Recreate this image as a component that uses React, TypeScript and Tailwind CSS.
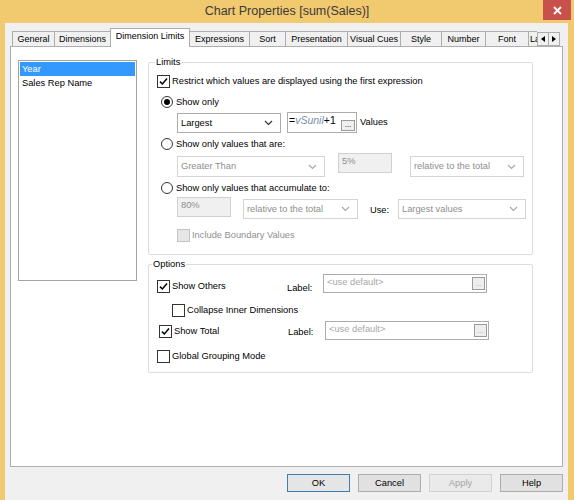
import React from 'react';

function Check({ checked = false, disabled = false }: { checked?: boolean; disabled?: boolean }) {
  return (
    <span
      className={`w-[13px] h-[13px] shrink-0 border flex items-center justify-center ${
        disabled ? 'border-[#c4c4c4] bg-[#e6e6e6]' : 'border-[#333333] bg-white'
      }`}
    >
      {checked && (
        <svg width="9" height="9" viewBox="0 0 9 9">
          <path d="M1 4.6 L3.4 7 L8 1.6" stroke="#000" strokeWidth="1.5" fill="none" />
        </svg>
      )}
    </span>
  );
}

function Radio({ on = false }: { on?: boolean }) {
  return (
    <span className="w-[12px] h-[12px] shrink-0 rounded-full border border-[#333333] bg-white flex items-center justify-center">
      {on && <span className="w-[6px] h-[6px] rounded-full bg-black" />}
    </span>
  );
}

function Chevron({ muted = false }: { muted?: boolean }) {
  return (
    <svg width="9" height="6" viewBox="0 0 9 6" className="shrink-0">
      <path d="M1 1 L4.5 4.5 L8 1" stroke={muted ? '#a8a8a8' : '#333'} strokeWidth="1.2" fill="none" />
    </svg>
  );
}

function Select({ text, className, disabled = false }: { text: string; className: string; disabled?: boolean }) {
  return (
    <div
      className={`flex items-center justify-between pl-[3px] pr-[7px] bg-white border ${
        disabled ? 'border-[#d4d4d4] text-[#8e8e8e]' : 'border-[#acacac] text-black'
      } ${className}`}
    >
      <span>{text}</span>
      <Chevron muted={disabled} />
    </div>
  );
}

function Dots({ className }: { className: string }) {
  return (
    <span
      className={`border border-[#9a9a9a] bg-[#eeeeee] flex items-end justify-center text-[8px] leading-[8px] pb-[1px] ${className}`}
    >
      ...
    </span>
  );
}

const tabs: { name: string; w: string; active?: boolean }[] = [
  { name: 'General', w: 'w-[43px]' },
  { name: 'Dimensions', w: 'w-[57px]' },
  { name: 'Dimension Limits', w: 'w-[80px]', active: true },
  { name: 'Expressions', w: 'w-[61px]' },
  { name: 'Sort', w: 'w-[37px]' },
  { name: 'Presentation', w: 'w-[63px]' },
  { name: 'Visual Cues', w: 'w-[54px]' },
  { name: 'Style', w: 'w-[42px]' },
  { name: 'Number', w: 'w-[45px]' },
  { name: 'Font', w: 'w-[44px]' },
];

export default function App() {
  return (
    <div className="w-[574px] h-[500px] bg-[#f1c96f] flex flex-col overflow-hidden font-['Liberation_Sans',Arial,sans-serif] text-[9.3px] leading-[13px] text-black">
      {/* title bar */}
      <div className="relative h-[23px] shrink-0 flex items-center justify-center">
        <span className="text-[12.5px] text-[#3a3a3a] leading-[23px]">Chart Properties [sum(Sales)]</span>
        <div className="absolute right-[3px] top-0 w-[28px] h-[20px] bg-[#c9514c] flex items-center justify-center">
          <svg width="9" height="9" viewBox="0 0 9 9">
            <path d="M1 1 L8 8 M8 1 L1 8" stroke="#fff" strokeWidth="1.8" />
          </svg>
        </div>
      </div>

      {/* client area */}
      <div className="ml-[5px] mr-[6px] flex-1 bg-[#f0f0f0] flex flex-col">
        {/* tab strip */}
        <div className="mt-[6px] h-[18px] flex items-end ml-[7px] relative z-10">
          <div className="w-[525px] h-[19px] flex items-end overflow-hidden">
            {tabs.map((t, i) => (
              <div
                key={t.name}
                className={`${t.w} shrink-0 flex items-center justify-center border border-b-0 text-[9px] ${
                  i > 0 ? '-ml-px' : ''
                } ${
                  t.active
                    ? 'h-[19px] bg-white border-[#adadad] relative z-10 pb-[3px]'
                    : 'h-[15px] bg-[#f0f0f0] border-[#adadad] mb-px'
                }`}
              >
                <span className="whitespace-nowrap">{t.name}</span>
              </div>
            ))}
            <div className="-ml-px w-[40px] h-[15px] mb-px shrink-0 border border-b-0 border-[#adadad] bg-[#f0f0f0] pl-px flex items-center text-[9px]">
              <span className="whitespace-nowrap">Layout</span>
            </div>
          </div>
          <div className="flex mb-px">
            <span className="w-[12px] h-[14px] border border-[#adadad] bg-[#f0f0f0] flex items-center justify-center">
              <svg width="4" height="6" viewBox="0 0 4 6">
                <path d="M4 0 L0 3 L4 6 Z" fill="#000" />
              </svg>
            </span>
            <span className="w-[12px] h-[14px] -ml-px border border-[#adadad] bg-[#f0f0f0] flex items-center justify-center">
              <svg width="4" height="6" viewBox="0 0 4 6">
                <path d="M0 0 L4 3 L0 6 Z" fill="#000" />
              </svg>
            </span>
          </div>
        </div>

        {/* tab page */}
        <div className="mx-[5px] h-[421px] -mt-px bg-white border border-[#adadad] flex items-start">
          {/* dimension list */}
          <div className="ml-[7px] mt-[13px] w-[119px] h-[221px] border border-[#a3a3a3] p-px flex flex-col">
            <div className="h-[14px] bg-[#3399ff] text-white pl-[2px] flex items-center">Year</div>
            <div className="h-[14px] pl-[2px] flex items-center">Sales Rep Name</div>
          </div>

          <div className="ml-[11px] mt-[9px] w-[385px] flex flex-col">
            {/* Limits */}
            <fieldset className="border border-[#dcdcdc] rounded-[2px] pb-[12px]">
              <legend className="ml-[6px] px-[1px] leading-[12px]">Limits</legend>
              <div className="flex flex-col">
                <label className="ml-[8px] mt-[7px] h-[13px] flex items-center gap-[2px]">
                  <Check checked />
                  <span>Restrict which values are displayed using the first expression</span>
                </label>

                <label className="ml-[12px] mt-[8px] h-[12px] flex items-center gap-[3px]">
                  <Radio on />
                  <span>Show only</span>
                </label>
                <div className="ml-[28px] mt-[4px] flex items-start">
                  <Select text="Largest" className="mt-px w-[104px] h-[20px]" />
                  <div className="ml-[6px] w-[70px] h-[21px] border border-[#acacac] bg-white flex items-start justify-between pl-[1px] pr-px text-[10.5px] leading-[12px]">
                    <span className="mt-px">
                      =<span className="italic text-[#7d8ea8]">vSunil</span>+1
                    </span>
                    <Dots className="mt-[7px] w-[14px] h-[11px]" />
                  </div>
                  <span className="ml-[3px] mt-[4px]">Values</span>
                </div>

                <label className="ml-[12px] mt-[5px] h-[12px] flex items-center gap-[3px]">
                  <Radio />
                  <span>Show only values that are:</span>
                </label>
                <div className="ml-[28px] mt-[3px] flex items-start">
                  <Select text="Greater Than" disabled className="mt-[3px] w-[148px] h-[21px]" />
                  <div className="ml-[13px] w-[54px] h-[20px] border border-[#d0d0d0] bg-[#f0f0f0] text-[#8e8e8e] pl-[3px] pt-px">
                    5%
                  </div>
                  <Select text="relative to the total" disabled className="ml-[18px] mt-[3px] w-[114px] h-[21px]" />
                </div>

                <label className="ml-[12px] mt-[5px] h-[12px] flex items-center gap-[3px]">
                  <Radio />
                  <span>Show only values that accumulate to:</span>
                </label>
                <div className="ml-[28px] mt-[3px] flex items-start">
                  <div className="w-[54px] h-[20px] border border-[#d0d0d0] bg-[#f0f0f0] text-[#8e8e8e] pl-[3px] pt-px">
                    80%
                  </div>
                  <Select text="relative to the total" disabled className="ml-[12px] mt-[2px] w-[115px] h-[20px]" />
                  <span className="ml-[12px] mt-[7px] w-[28px]">Use:</span>
                  <Select text="Largest values" disabled className="mt-[2px] w-[128px] h-[20px]" />
                </div>

                <label className="ml-[28px] mt-[10px] h-[13px] flex items-center gap-[2px] text-[#8e8e8e]">
                  <Check disabled />
                  <span>Include Boundary Values</span>
                </label>
              </div>
            </fieldset>

            {/* Options */}
            <fieldset className="mt-[3px] border border-[#dcdcdc] rounded-[2px] pb-[9px]">
              <legend className="ml-[3px] px-[1px] leading-[12px]">Options</legend>
              <div className="flex flex-col">
                <div className="ml-[8px] mt-[4px] flex items-start">
                  <label className="w-[130px] mt-[6px] h-[13px] flex items-center gap-[2px]">
                    <Check checked />
                    <span>Show Others</span>
                  </label>
                  <span className="w-[36px] mt-[8px]">Label:</span>
                  <div className="w-[164px] h-[19px] border border-[#acacac] bg-white flex items-start justify-between pl-[3px] pr-px text-[#a8a8a8]">
                    <span className="mt-px">&lt;use default&gt;</span>
                    <Dots className="mt-[2px] w-[13px] h-[13px]" />
                  </div>
                </div>

                <label className="ml-[23px] mt-[9px] h-[13px] flex items-center gap-[2px]">
                  <Check />
                  <span>Collapse Inner Dimensions</span>
                </label>

                <div className="ml-[10px] mt-[4px] flex items-start">
                  <label className="w-[129px] mt-[4px] h-[13px] flex items-center gap-[2px]">
                    <Check checked />
                    <span>Show Total</span>
                  </label>
                  <span className="w-[37px] mt-[5px]">Label:</span>
                  <div className="w-[164px] h-[19px] border border-[#acacac] bg-white flex items-start justify-between pl-[3px] pr-px text-[#a8a8a8]">
                    <span className="mt-px">&lt;use default&gt;</span>
                    <Dots className="mt-[2px] w-[13px] h-[13px]" />
                  </div>
                </div>

                <label className="ml-[8px] mt-[10px] h-[13px] flex items-center gap-[2px]">
                  <Check />
                  <span>Global Grouping Mode</span>
                </label>
              </div>
            </fieldset>
          </div>
        </div>

        {/* dialog buttons */}
        <div className="mt-[7px] mr-[5px] flex justify-end gap-[8px]">
          <button className="w-[63px] h-[18px] border border-[#3c7fb1] bg-[#e5e5e5] flex items-center justify-center">OK</button>
          <button className="w-[63px] h-[18px] border border-[#adadad] bg-[#e1e1e1] flex items-center justify-center">Cancel</button>
          <button className="w-[63px] h-[18px] border border-[#d2d2d2] bg-[#eaeaea] text-[#a3a3a3] flex items-center justify-center">Apply</button>
          <button className="w-[63px] h-[18px] border border-[#adadad] bg-[#e1e1e1] flex items-center justify-center">Help</button>
        </div>
      </div>
    </div>
  );
}
